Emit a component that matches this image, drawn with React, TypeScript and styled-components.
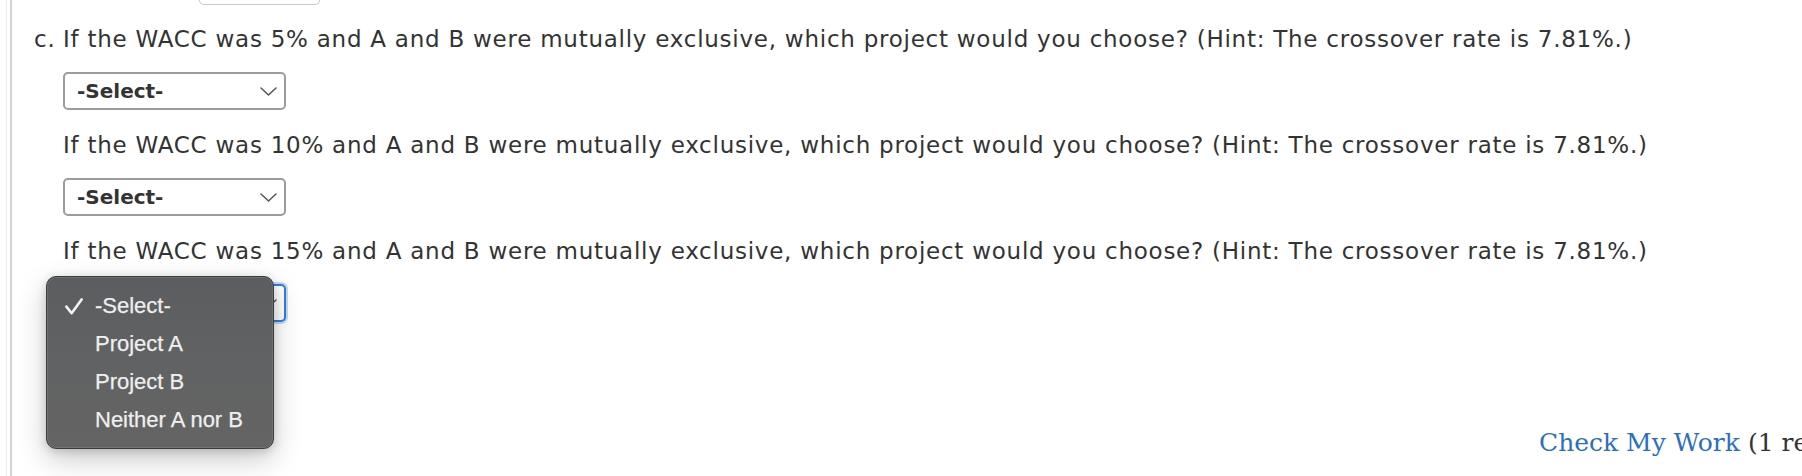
import React from "react";
import styled, { createGlobalStyle } from "styled-components";

const GlobalStyle = createGlobalStyle`
  html, body {
    margin: 0;
    padding: 0;
    background: #ffffff;
    overflow: hidden;
  }
  body {
    font-family: "DejaVu Sans", Verdana, sans-serif;
    color: #333333;
  }
`;

const Page = styled.div`
  height: 476px;
  margin-left: 6px;
  padding-left: 3px;
  border-left: 1px solid #ededed;
  box-sizing: border-box;
`;

const Panel = styled.div`
  height: 100%;
  border-left: 2px solid #d2d2d2;
  padding-left: 22px;
  display: flex;
  flex-direction: column;
`;

const PrevField = styled.div`
  margin-left: 165px;
  width: 119px;
  height: 4px;
  border: 1px solid #c9c9c9;
  border-top: none;
  border-radius: 0 0 5px 5px;
`;

const Item = styled.div`
  display: grid;
  grid-template-columns: 29px 1fr;
  margin-top: 18px;
`;

const Label = styled.div`
  font-size: 23px;
  line-height: 33px;
  letter-spacing: 0.75px;
`;

const Body = styled.div`
  display: flex;
  flex-direction: column;
`;

const Prompt = styled.p<{ $first?: boolean }>`
  margin: ${(p) => (p.$first ? "0" : "19px")} 0 0 0;
  font-size: 23px;
  line-height: 33px;
  letter-spacing: 0.75px;
  white-space: nowrap;
`;

const SelectWrap = styled.div`
  position: relative;
  margin-top: 16px;
  width: 223px;
  height: 38px;
`;

const SelectBox = styled.div<{ $focused?: boolean }>`
  box-sizing: border-box;
  width: 100%;
  height: 100%;
  display: flex;
  align-items: center;
  justify-content: space-between;
  padding: 0 7px 0 12px;
  border: 2px solid ${(p) => (p.$focused ? "#2f7fd8" : "#9c9c9c")};
  border-radius: 5px;
  background: #ffffff;
  box-shadow: ${(p) =>
    p.$focused ? "0 0 0 2px rgba(80, 150, 230, 0.35)" : "none"};
  font-size: 20px;
  font-weight: bold;
  color: #333333;
`;

const Chevron = () => (
  <svg width="17" height="9" viewBox="0 0 17 9" fill="none">
    <polyline
      points="1,1 8.5,8 16,1"
      stroke="#555555"
      strokeWidth="1.5"
      strokeLinecap="round"
      strokeLinejoin="round"
    />
  </svg>
);

const Menu = styled.div`
  position: absolute;
  left: -17px;
  top: -8px;
  width: 228px;
  height: 173px;
  box-sizing: border-box;
  padding: 10px 0;
  border-radius: 10px;
  border: 1px solid #3c3c3c;
  background: linear-gradient(180deg, #5b5d60 0%, #616263 50%, #646464 100%);
  box-shadow: inset 0 0 0 1px rgba(255, 255, 255, 0.1),
    0 10px 28px rgba(0, 0, 0, 0.22), 0 2px 8px rgba(0, 0, 0, 0.15);
  z-index: 5;
  font-family: "Liberation Sans", Arial, sans-serif;
  font-size: 22px;
  color: #efefef;
  -webkit-text-stroke: 0.25px #efefef;
`;

const MenuItem = styled.div`
  height: 38px;
  display: flex;
  align-items: center;
  padding-left: 18px;
`;

const CheckSlot = styled.span`
  width: 30px;
  display: flex;
  align-items: center;
`;

const Check = () => (
  <svg width="18" height="17" viewBox="0 0 18 17" fill="none">
    <path
      d="M1.4 8.6 L6.6 15.2 L16.6 1.4"
      stroke="#f2f2f2"
      strokeWidth="2.6"
      strokeLinecap="round"
      strokeLinejoin="round"
    />
  </svg>
);

const Footer = styled.div`
  margin-top: 104px;
  padding-left: 1505px;
  white-space: nowrap;
  font-family: "DejaVu Serif", Georgia, serif;
  font-size: 25px;
  line-height: 34px;
  color: #333333;
`;

const Link = styled.a`
  color: #2c6fc0;
  text-decoration: none;
`;

const hint = "(Hint: The crossover rate is 7.81%.)";
const questions = [
  `If the WACC was 5% and A and B were mutually exclusive, which project would you choose? ${hint}`,
  `If the WACC was 10% and A and B were mutually exclusive, which project would you choose? ${hint}`,
  `If the WACC was 15% and A and B were mutually exclusive, which project would you choose? ${hint}`,
];

const options = ["-Select-", "Project A", "Project B", "Neither A nor B"];

export default function App() {
  return (
    <>
      <GlobalStyle />
      <Page>
        <Panel>
          <PrevField />
          <Item>
            <Label>c.</Label>
            <Body>
              {questions.map((q, i) => (
                <React.Fragment key={i}>
                  <Prompt $first={i === 0}>{q}</Prompt>
                  <SelectWrap>
                    <SelectBox $focused={i === 2}>
                      <span>-Select-</span>
                      <Chevron />
                    </SelectBox>
                    {i === 2 && (
                      <Menu>
                        {options.map((o, j) => (
                          <MenuItem key={o}>
                            <CheckSlot>{j === 0 && <Check />}</CheckSlot>
                            {o}
                          </MenuItem>
                        ))}
                      </Menu>
                    )}
                  </SelectWrap>
                </React.Fragment>
              ))}
            </Body>
          </Item>
          <Footer>
            <Link href="#">Check My Work</Link> (1 remaining)
          </Footer>
        </Panel>
      </Page>
    </>
  );
}
